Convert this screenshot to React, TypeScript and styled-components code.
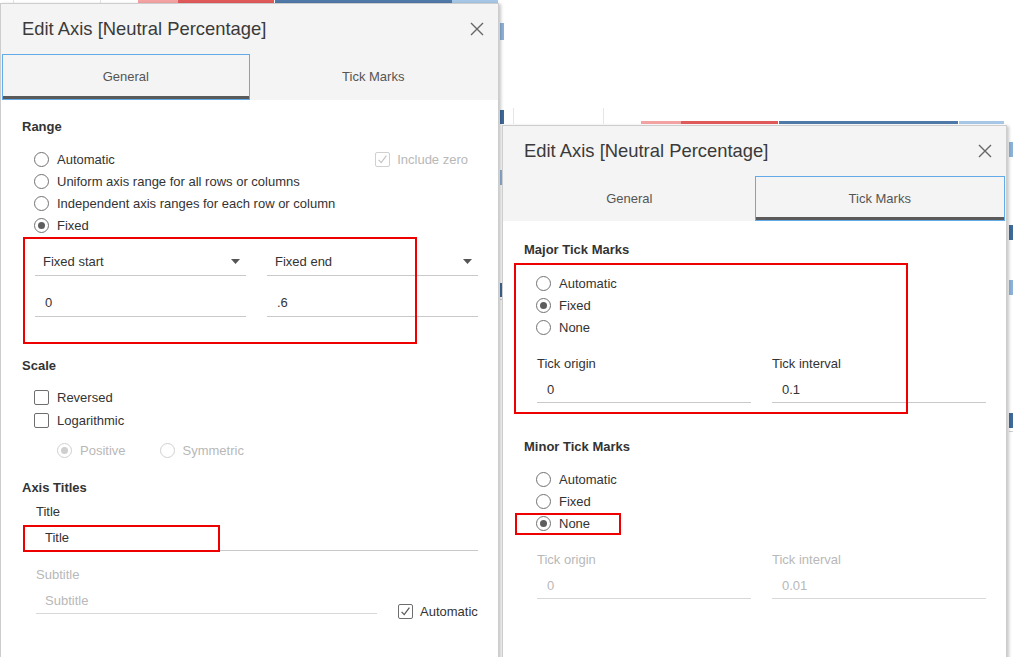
import React from "react";
import styled, { createGlobalStyle } from "styled-components";

const GlobalStyle = createGlobalStyle`
  html, body { margin: 0; padding: 0; background: #fff; }
  body {
    font-family: "Liberation Sans", Arial, sans-serif;
    font-size: 13px;
    color: #333;
    overflow: hidden;
  }
  * { box-sizing: border-box; }
`;

const Desktop = styled.div`
  position: relative;
  width: 1013px;
  height: 657px;
  overflow: hidden;
  background: #fff;
`;

const ChartMark = styled.div<{ $x: number; $y: number; $w: number; $h: number; $c: string }>`
  position: absolute;
  left: ${(p) => p.$x}px;
  top: ${(p) => p.$y}px;
  width: ${(p) => p.$w}px;
  height: ${(p) => p.$h}px;
  background: ${(p) => p.$c};
`;

const Dialog = styled.section<{ $x: number; $y: number; $w: number }>`
  position: absolute;
  left: ${(p) => p.$x}px;
  top: ${(p) => p.$y}px;
  width: ${(p) => p.$w}px;
  height: ${(p) => 680 - p.$y}px;
  background: #fff;
  border: 1px solid #cdcdcd;
  box-shadow: 2px 1px 3px rgba(0, 0, 0, 0.22);
  display: flex;
  flex-direction: column;
`;

const Header = styled.header`
  height: 50px;
  flex: none;
  display: flex;
  align-items: center;
  justify-content: space-between;
  padding: 0 13px 0 21px;
  background: #f4f4f4;
`;

const Title = styled.h1`
  margin: 0;
  font-size: 18.4px;
  font-weight: 400;
  color: #3a3a3a;
  letter-spacing: 0;
`;

const CloseButton = styled.button`
  width: 16px;
  height: 16px;
  padding: 0;
  border: 0;
  background: transparent;
  display: flex;
  align-items: center;
  justify-content: center;
`;

const TabRow = styled.div<{ $h: number }>`
  height: ${(p) => p.$h}px;
  flex: none;
  display: flex;
  padding: 0 1px;
  background: #f4f4f4;
`;

const Tab = styled.div<{ $active?: boolean }>`
  flex: 1;
  display: flex;
  align-items: center;
  justify-content: center;
  font-size: 13px;
  color: #555;
  padding-bottom: 1px;
  border: 1px solid ${(p) => (p.$active ? "#63aae8" : "transparent")};
  box-shadow: ${(p) => (p.$active ? "inset 0 -3px 0 #5a5a5a" : "none")};
  background: #f4f4f4;
`;

const Body = styled.div`
  flex: 1;
  padding: 0 20px 0 21px;
  display: flex;
  flex-direction: column;
`;

const SectionTitle = styled.h2<{ $mt: number }>`
  margin: ${(p) => p.$mt}px 0 0;
  font-size: 13px;
  line-height: 16px;
  font-weight: 700;
  color: #333;
`;

const OptionList = styled.div<{ $mt: number; $row: number }>`
  margin-top: ${(p) => p.$mt}px;
  margin-left: 12px;
  display: grid;
  grid-auto-rows: ${(p) => p.$row}px;
`;

const OptionRow = styled.label<{ $disabled?: boolean }>`
  position: relative;
  display: flex;
  align-items: center;
  gap: 8px;
  font-size: 13px;
  color: ${(p) => (p.$disabled ? "#b8b8b8" : "#333")};
  white-space: nowrap;
`;

const SideOption = styled.span`
  margin-left: auto;
  margin-right: 10px;
  display: flex;
  align-items: center;
  gap: 7px;
  color: #b8b8b8;
`;

const RadioCircle = styled.span<{ $checked?: boolean; $disabled?: boolean }>`
  width: 15px;
  height: 15px;
  flex: none;
  border-radius: 50%;
  border: 1px solid ${(p) => (p.$disabled ? "#d0d0d0" : "#727272")};
  background: #fff;
  display: inline-flex;
  align-items: center;
  justify-content: center;
  &::after {
    content: "";
    width: 7px;
    height: 7px;
    border-radius: 50%;
    background: ${(p) => (p.$disabled ? "#cfcfcf" : "#5e5e5e")};
    display: ${(p) => (p.$checked ? "block" : "none")};
  }
`;

const CheckBox = styled.span<{ $disabled?: boolean }>`
  width: 15px;
  height: 15px;
  flex: none;
  border: 1px solid ${(p) => (p.$disabled ? "#d0d0d0" : "#6e6e6e")};
  border-radius: 2px;
  background: #fff;
  display: inline-flex;
  align-items: center;
  justify-content: center;
`;

const SubOptions = styled.div`
  margin-top: 7px;
  margin-left: 35px;
  height: 22px;
  display: flex;
  align-items: center;
  gap: 34px;
`;

const Annotated = styled.div`
  position: relative;
`;

const Highlight = styled.div<{ $l: number; $t: number; $w: number; $h: number }>`
  position: absolute;
  left: ${(p) => p.$l}px;
  top: ${(p) => p.$t}px;
  width: ${(p) => p.$w}px;
  height: ${(p) => p.$h}px;
  border: 2px solid #ee0000;
  pointer-events: none;
`;

const RangeGrid = styled(Annotated)`
  margin-top: 11px;
  margin-left: 13px;
  display: grid;
  grid-template-columns: 211px 211px;
  column-gap: 21px;
  row-gap: 12px;
`;

const Field = styled.div<{ $h?: number; $pl?: number; $muted?: boolean }>`
  height: ${(p) => p.$h ?? 27}px;
  display: flex;
  align-items: center;
  justify-content: space-between;
  padding: 0 6px 0 ${(p) => p.$pl ?? 10}px;
  border-bottom: 1px solid ${(p) => (p.$muted ? "#d8d8d8" : "#c9c9c9")};
  font-size: 13px;
  color: ${(p) => (p.$muted ? "#b8b8b8" : "#333")};
`;

const FieldLabel = styled.div<{ $mt: number; $muted?: boolean }>`
  margin-top: ${(p) => p.$mt}px;
  line-height: 16px;
  font-size: 13px;
  color: ${(p) => (p.$muted ? "#b8b8b8" : "#333")};
`;

const Indented = styled.div<{ $ml: number }>`
  margin-left: ${(p) => p.$ml}px;
  display: flex;
  flex-direction: column;
`;

const SubtitleRow = styled.div`
  margin-top: 4px;
  display: flex;
  align-items: flex-start;
  gap: 21px;
`;

const SubtitleField = styled(Field)`
  width: 341px;
`;

const AutoCheck = styled.label`
  margin-top: 17px;
  display: flex;
  align-items: center;
  gap: 7px;
  color: #333;
`;

const TickGrid = styled.div`
  margin-left: 13px;
  display: grid;
  grid-template-columns: 214px 214px;
  column-gap: 21px;
`;

const TickColumn = styled.div`
  display: flex;
  flex-direction: column;
`;

const TickField = styled(Field)`
  margin-top: 4px;
`;

const CloseIcon = () => (
  <svg width="14" height="14" viewBox="0 0 14 14">
    <path d="M1 1 L13 13 M13 1 L1 13" stroke="#666" strokeWidth="1.4" fill="none" />
  </svg>
);

const CheckMark = ({ color }: { color: string }) => (
  <svg width="13" height="13" viewBox="0 0 13 13">
    <path d="M2.6 6.8 L5.2 9.6 L10.4 2.6" stroke={color} strokeWidth="1.2" fill="none" />
  </svg>
);

const Caret = () => (
  <svg width="9" height="5" viewBox="0 0 9 5">
    <polygon points="0,0 9,0 4.5,5" fill="#555" />
  </svg>
);

type RadioProps = { label: string; checked?: boolean; disabled?: boolean; children?: React.ReactNode };

const Radio = ({ label, checked, disabled, children }: RadioProps) => (
  <OptionRow $disabled={disabled}>
    <RadioCircle $checked={checked} $disabled={disabled} />
    {label}
    {children}
  </OptionRow>
);

const Check = ({ label, checked }: { label: string; checked?: boolean }) => (
  <OptionRow>
    <CheckBox>{checked && <CheckMark color="#555" />}</CheckBox>
    {label}
  </OptionRow>
);

type TickProps = { origin: string; interval: string; muted?: boolean };

const TickFields = ({ origin, interval, muted }: TickProps) => (
  <TickGrid>
    <TickColumn>
      <FieldLabel $mt={18} $muted={muted}>Tick origin</FieldLabel>
      <TickField $muted={muted}>{origin}</TickField>
    </TickColumn>
    <TickColumn>
      <FieldLabel $mt={18} $muted={muted}>Tick interval</FieldLabel>
      <TickField $muted={muted}>{interval}</TickField>
    </TickColumn>
  </TickGrid>
);

const chartMarks = [
  { x: 138, y: 0, w: 40, h: 3, c: "#f4a3a3" },
  { x: 178, y: 0, w: 96, h: 3, c: "#e05a5a" },
  { x: 275, y: 0, w: 177, h: 3, c: "#4f79a8" },
  { x: 452, y: 0, w: 46, h: 3, c: "#a6c8e6" },
  { x: 13, y: 0, w: 1, h: 3, c: "#e4e4e4" },
  { x: 100, y: 0, w: 1, h: 3, c: "#e4e4e4" },
  { x: 500, y: 23, w: 4, h: 17, c: "#8db3d9" },
  { x: 500, y: 110, w: 4, h: 14, c: "#3f6a99" },
  { x: 500, y: 170, w: 4, h: 15, c: "#8db3d9" },
  { x: 500, y: 283, w: 4, h: 14, c: "#3f6a99" },
  { x: 500, y: 299, w: 4, h: 1, c: "#cfcfcf" },
  { x: 641, y: 121, w: 40, h: 3, c: "#f4a3a3" },
  { x: 681, y: 121, w: 97, h: 3, c: "#e05a5a" },
  { x: 779, y: 121, w: 179, h: 3, c: "#4f79a8" },
  { x: 959, y: 121, w: 45, h: 3, c: "#a6c8e6" },
  { x: 513, y: 108, w: 1, h: 16, c: "#e6e6e6" },
  { x: 603, y: 108, w: 1, h: 16, c: "#e6e6e6" },
  { x: 1009, y: 142, w: 4, h: 15, c: "#8db3d9" },
  { x: 1009, y: 225, w: 4, h: 15, c: "#3f6a99" },
  { x: 1009, y: 280, w: 4, h: 15, c: "#8db3d9" },
  { x: 1009, y: 413, w: 4, h: 15, c: "#3f6a99" },
  { x: 1009, y: 431, w: 4, h: 1, c: "#cfcfcf" },
];

const GeneralDialog = () => (
  <Dialog $x={0} $y={3} $w={499}>
    <Header>
      <Title>Edit Axis [Neutral Percentage]</Title>
      <CloseButton aria-label="Close"><CloseIcon /></CloseButton>
    </Header>
    <TabRow $h={46}>
      <Tab $active>General</Tab>
      <Tab>Tick Marks</Tab>
    </TabRow>
    <Body>
      <SectionTitle $mt={19}>Range</SectionTitle>
      <OptionList $mt={13} $row={22}>
        <Radio label="Automatic">
          <SideOption>
            <CheckBox $disabled><CheckMark color="#c4c4c4" /></CheckBox>
            Include zero
          </SideOption>
        </Radio>
        <Radio label="Uniform axis range for all rows or columns" />
        <Radio label="Independent axis ranges for each row or column" />
        <Radio label="Fixed" checked />
      </OptionList>
      <RangeGrid>
        <Field $h={29} $pl={8}>Fixed start<Caret /></Field>
        <Field $h={29} $pl={8}>Fixed end<Caret /></Field>
        <Field $h={29}>0</Field>
        <Field $h={29}>.6</Field>
        <Highlight $l={-12} $t={-10} $w={394} $h={107} />
      </RangeGrid>

      <SectionTitle $mt={41}>Scale</SectionTitle>
      <OptionList $mt={12} $row={23}>
        <Check label="Reversed" />
        <Check label="Logarithmic" />
      </OptionList>
      <SubOptions>
        <Radio label="Positive" checked disabled />
        <Radio label="Symmetric" disabled />
      </SubOptions>

      <SectionTitle $mt={19}>Axis Titles</SectionTitle>
      <Indented $ml={14}>
        <FieldLabel $mt={8}>Title</FieldLabel>
        <Annotated style={{ marginTop: 4 }}>
          <Field $pl={9}>Title</Field>
          <Highlight $l={-13} $t={1} $w={197} $h={27} />
        </Annotated>
        <FieldLabel $mt={16} $muted>Subtitle</FieldLabel>
        <SubtitleRow>
          <SubtitleField $pl={9} $muted>Subtitle</SubtitleField>
          <AutoCheck>
            <CheckBox><CheckMark color="#555" /></CheckBox>
            Automatic
          </AutoCheck>
        </SubtitleRow>
      </Indented>
    </Body>
  </Dialog>
);

const TickDialog = () => (
  <Dialog $x={502} $y={125} $w={505}>
    <Header>
      <Title>Edit Axis [Neutral Percentage]</Title>
      <CloseButton aria-label="Close"><CloseIcon /></CloseButton>
    </Header>
    <TabRow $h={45}>
      <Tab>General</Tab>
      <Tab $active>Tick Marks</Tab>
    </TabRow>
    <Body>
      <SectionTitle $mt={21}>Major Tick Marks</SectionTitle>
      <Annotated>
        <OptionList $mt={14} $row={22}>
          <Radio label="Automatic" />
          <Radio label="Fixed" checked />
          <Radio label="None" />
        </OptionList>
        <TickFields origin="0" interval="0.1" />
        <Highlight $l={-10} $t={5} $w={394} $h={151} />
      </Annotated>

      <SectionTitle $mt={36}>Minor Tick Marks</SectionTitle>
      <OptionList $mt={13} $row={22}>
        <Radio label="Automatic" />
        <Radio label="Fixed" />
        <Radio label="None" checked>
          <Highlight $l={-21} $t={1} $w={106} $h={22} />
        </Radio>
      </OptionList>
      <TickFields origin="0" interval="0.01" muted />
    </Body>
  </Dialog>
);

export default function App() {
  return (
    <>
      <GlobalStyle />
      <Desktop>
        {chartMarks.map((m, i) => (
          <ChartMark key={i} $x={m.x} $y={m.y} $w={m.w} $h={m.h} $c={m.c} />
        ))}
        <GeneralDialog />
        <TickDialog />
      </Desktop>
    </>
  );
}
